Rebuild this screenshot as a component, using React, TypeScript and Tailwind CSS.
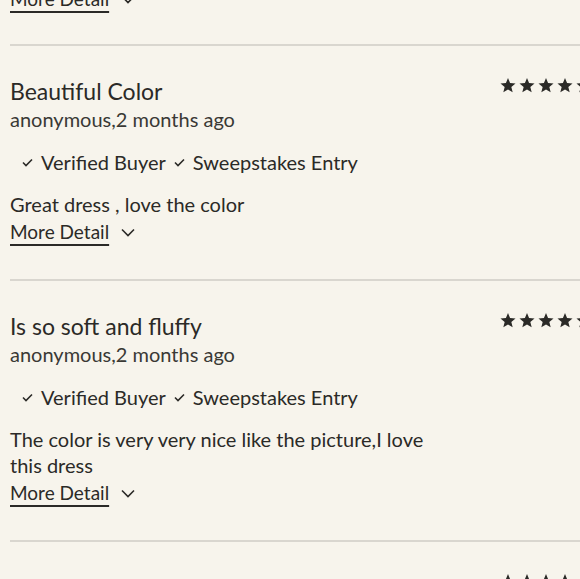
const reviews = [
  {
    title: 'Beautiful Color',
    body: 'Great dress , love the color',
  },
  {
    title: 'Is so soft and fluffy',
    body: 'The color is very very nice like the picture,I love this dress',
  },
];

const Stars = () => (
  <div className="flex gap-[3px] text-[#2b2a27]">
    {[0, 1, 2, 3, 4].map((i) => (
      <svg key={i} width="16" height="16" viewBox="0 0 24 24" fill="currentColor">
        <path d="M12 1.5l3.1 7.6 8.2.6-6.3 5.3 2 8-7-4.4-7 4.4 2-8L.7 9.7l8.2-.6z" />
      </svg>
    ))}
  </div>
);

const Check = () => (
  <svg width="11" height="9" viewBox="0 0 11 9" fill="none" stroke="currentColor" strokeWidth="1.6">
    <path d="M1 4.5l3 3L10 1.5" />
  </svg>
);

const Chevron = () => (
  <svg width="14" height="9" viewBox="0 0 14 9" fill="none" stroke="currentColor" strokeWidth="1.6">
    <path d="M1 1.5l6 6 6-6" />
  </svg>
);

const MoreDetail = () => (
  <button className="flex items-center gap-3 text-[19px] leading-[28px] text-[#2b2a27]">
    <span className="underline underline-offset-[5px] decoration-[1.5px]">More Detail</span>
    <Chevron />
  </button>
);

const Review = ({ title, body }: { title: string; body: string }) => (
  <div className="border-t-2 border-[#d9d6cf] pt-[31px] pb-[33px] flex">
    <div className="w-[490px]">
      <div className="max-w-[420px]">
        <h3 className="text-[23px] leading-[28px] text-[#2b2a27]">{title}</h3>
        <p className="text-[20px] leading-[28px] text-[#3a3935]">anonymous,2 months ago</p>
        <div className="flex items-center gap-2 mt-[15px] ml-[12px] text-[20px] leading-[28px] text-[#2b2a27]">
          <span className="flex items-center gap-2"><Check />Verified Buyer</span>
          <span className="flex items-center gap-2"><Check />Sweepstakes Entry</span>
        </div>
        <p className="mt-[15px] text-[20px] leading-[26px] text-[#2b2a27]">{body}</p>
        <div className="mt-[1px]">
          <MoreDetail />
        </div>
      </div>
    </div>
    <div>
      <Stars />
    </div>
  </div>
);

export default function App() {
  return (
    <div className="h-[579px] w-[580px] overflow-hidden bg-[#f7f4ec]" style={{ fontFamily: 'Lato, "Noto Sans", sans-serif' }}>
      <div className="w-[640px] pl-[10px] -mt-[15px]">
        <div className="pb-[3px]">
          <MoreDetail />
        </div>
        <div className="h-[28px]" />
        {reviews.map((r) => (
          <Review key={r.title} title={r.title} body={r.body} />
        ))}
        <Review title="Love it" body="" />
      </div>
    </div>
  );
}
